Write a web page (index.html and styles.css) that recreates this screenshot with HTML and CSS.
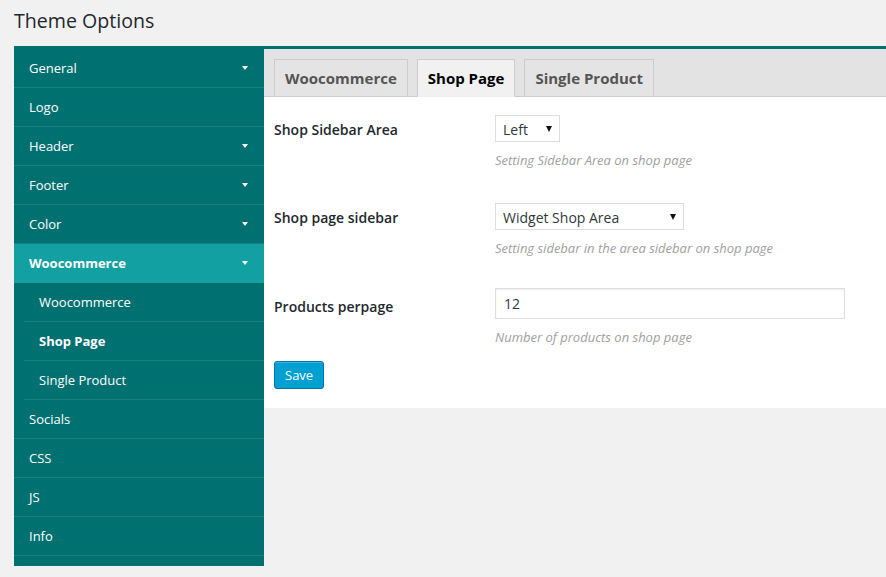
FILE: index.html
```html
<!DOCTYPE html>
<html>
<head>
<meta charset="utf-8">
<title>Theme Options</title>
<link rel="stylesheet" href="styles.css">
</head>
<body>
<div class="wrap">
  <h1 class="title">Theme Options</h1>
  <div class="options">
    <ul class="nav">
      <li class="nav-item"><span>General</span><i class="caret"></i></li>
      <li class="nav-item"><span>Logo</span></li>
      <li class="nav-item"><span>Header</span><i class="caret"></i></li>
      <li class="nav-item"><span>Footer</span><i class="caret"></i></li>
      <li class="nav-item"><span>Color</span><i class="caret"></i></li>
      <li class="nav-item active"><span>Woocommerce</span><i class="caret"></i></li>
      <li class="nav-sub">
        <ul class="sub">
          <li class="sub-item"><span>Woocommerce</span></li>
          <li class="sub-item current"><span>Shop Page</span></li>
          <li class="sub-item"><span>Single Product</span></li>
        </ul>
      </li>
      <li class="nav-item"><span>Socials</span></li>
      <li class="nav-item"><span>CSS</span></li>
      <li class="nav-item"><span>JS</span></li>
      <li class="nav-item"><span>Info</span></li>
    </ul>
    <div class="panel">
      <div class="tabs">
        <div class="tab">Woocommerce</div>
        <div class="tab tab-active">Shop Page</div>
        <div class="tab">Single Product</div>
      </div>
      <div class="content">
        <div class="row">
          <div class="label">Shop Sidebar Area</div>
          <div class="field">
            <div class="select select-small"><span>Left</span><i class="arrow"></i></div>
            <div class="desc">Setting Sidebar Area on shop page</div>
          </div>
        </div>
        <div class="row">
          <div class="label">Shop page sidebar</div>
          <div class="field">
            <div class="select select-wide"><span>Widget Shop Area</span><i class="arrow"></i></div>
            <div class="desc">Setting sidebar in the area sidebar on shop page</div>
          </div>
        </div>
        <div class="row row-input">
          <div class="label label-input">Products perpage</div>
          <div class="field">
            <div class="input">12</div>
            <div class="desc">Number of products on shop page</div>
          </div>
        </div>
        <div class="actions">
          <button class="btn-save">Save</button>
        </div>
      </div>
    </div>
  </div>
</div>
</body>
</html>
```

FILE: styles.css
```css
* { box-sizing: border-box; }

body {
  margin: 0;
  background: #f1f1f1;
  font-family: "Open Sans", "Noto Sans", sans-serif;
  color: #23282d;
}

.wrap {
  padding-left: 14px;
}

.title {
  margin: 0;
  padding: 7px 0 12px;
  font-size: 19.6px;
  line-height: 27px;
  font-weight: 400;
  color: #23282d;
}

.options {
  display: flex;
  align-items: flex-start;
}

.nav {
  list-style: none;
  margin: 0;
  padding: 3px 0 10px;
  width: 250px;
  flex: none;
  background: #017071;
}

.nav-item {
  display: flex;
  align-items: center;
  justify-content: space-between;
  height: 39px;
  padding: 0 16px 0 15px;
  border-bottom: 1px solid #19807f;
  color: #fff;
  font-size: 13px;
}

.nav-item.active {
  background: #13a0a3;
  font-weight: 700;
  border-bottom-color: #13a0a3;
}

.caret {
  width: 0;
  height: 0;
  border-left: 3px solid transparent;
  border-right: 3px solid transparent;
  border-top: 4px solid #fff;
}

.nav-sub {
  padding-left: 10px;
}

.sub {
  list-style: none;
  margin: 0;
  padding: 0;
}

.sub-item {
  display: flex;
  align-items: center;
  height: 39px;
  padding-left: 15px;
  border-bottom: 1px solid #19807f;
  color: #fff;
  font-size: 13px;
}

.sub-item.current {
  font-weight: 700;
}

.panel {
  flex: 1;
  background: #fff;
  border-top: 3px solid #017071;
}

.tabs {
  display: flex;
  gap: 9px;
  padding: 10px 10px 0;
  background: #e3e3e3;
  border-bottom: 1px solid #cccccc;
}

.tab {
  height: 37px;
  margin-bottom: -1px;
  padding: 0 10px;
  border: 1px solid #cccccc;
  border-bottom: none;
  background: #e4e4e4;
  color: #555;
  font-size: 15px;
  font-weight: 700;
  line-height: 36px;
}

.tab-active {
  background: #f1f1f1;
  color: #000;
  height: 38px;
  border-bottom: 1px solid #f1f1f1;
}

.content {
  padding: 0 10px 19px;
}

.row {
  display: flex;
  padding: 18px 0 16px;
}

.row-input {
  padding: 15px 0 15px;
}

.label {
  width: 221px;
  flex: none;
  font-size: 14px;
  font-weight: 600;
  line-height: 30px;
  color: #23282d;
}

.label-input {
  line-height: 37px;
}

.field {
  flex: 1;
}

.select {
  display: flex;
  align-items: center;
  justify-content: space-between;
  height: 27px;
  padding: 0 7px;
  border: 1px solid #dddddd;
  background: #fff;
  font-size: 14px;
  color: #32373c;
}

.select span {
  padding-top: 2px;
}

.select-small { width: 65px; }
.select-wide { width: 189px; }

.arrow {
  width: 0;
  height: 0;
  border-left: 3px solid transparent;
  border-right: 3px solid transparent;
  border-top: 6px solid #111;
}

.input {
  width: 350px;
  height: 31px;
  padding: 0 8px;
  border: 1px solid #dddddd;
  box-shadow: inset 0 1px 2px rgba(0, 0, 0, 0.07);
  font-size: 14px;
  line-height: 30px;
  color: #32373c;
}

.desc {
  margin-top: 9px;
  font-size: 13px;
  line-height: 18px;
  font-style: italic;
  color: #a0a0a0;
}

.actions {
  padding-top: 0;
}

.btn-save {
  height: 28px;
  padding: 0 10px;
  border: 1px solid #0073aa;
  border-radius: 3px;
  background: #00a0d2;
  color: #fff;
  font-family: "Open Sans", "Noto Sans", sans-serif;
  font-size: 13px;
  box-shadow: inset 0 1px 0 rgba(120, 200, 230, 0.5);
}
```
